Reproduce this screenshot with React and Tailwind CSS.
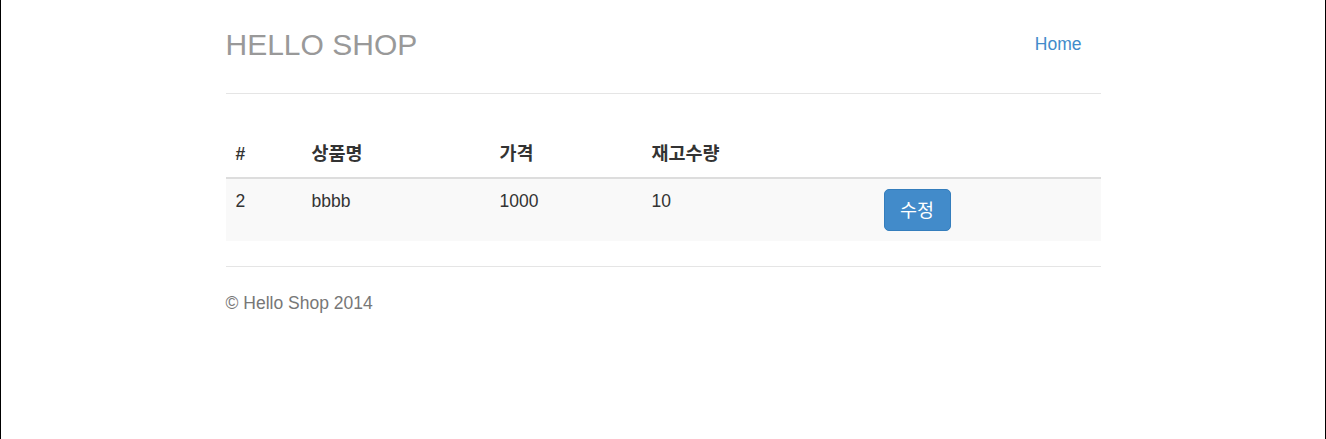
export default function App() {
  const font = { fontFamily: '"Liberation Sans", "Noto Sans CJK KR", Arial, sans-serif' };
  return (
    <div className="min-h-[439px] border-x border-black bg-white text-[#333] text-[17.5px] leading-[25px]" style={font}>
      <div className="w-[875px] mx-auto pt-[20px]">
        <div className="flex justify-between border-b border-[#e5e5e5] pb-[23px]">
          <h3 className="text-[30px] leading-[50px] text-[#999] font-normal m-0">HELLO SHOP</h3>
          <ul className="flex">
            <li>
              <a className="block px-[19px] pt-[11.5px] pb-[13.5px] text-[#428bca] leading-[25px]" href="#">Home</a>
            </li>
          </ul>
        </div>
        <table className="w-full table-fixed border-collapse mt-[38px] mb-[25px]">
          <thead>
            <tr>
              <th className="w-[76px] text-left font-bold px-[10px] pt-[10px] pb-[10px] border-b-2 border-[#ddd]">#</th>
              <th className="w-[188px] text-left font-bold px-[10px] pt-[10px] pb-[10px] border-b-2 border-[#ddd]"><span className="text-[18.5px] leading-[18px]">상품명</span></th>
              <th className="w-[152px] text-left font-bold px-[10px] pt-[10px] pb-[10px] border-b-2 border-[#ddd]"><span className="text-[18.5px] leading-[18px]">가격</span></th>
              <th className="w-[232px] text-left font-bold px-[10px] pt-[10px] pb-[10px] border-b-2 border-[#ddd]"><span className="text-[18.5px] leading-[18px]">재고수량</span></th>
              <th className="text-left font-bold px-[10px] pt-[10px] pb-[10px] border-b-2 border-[#ddd]"></th>
            </tr>
          </thead>
          <tbody>
            <tr className="bg-[#f9f9f9]">
              <td className="align-top p-[10px]">2</td>
              <td className="align-top p-[10px]">bbbb</td>
              <td className="align-top p-[10px]">1000</td>
              <td className="align-top p-[10px]">10</td>
              <td className="align-top p-[10px]">
                <button className="block bg-[#428bca] border border-[#357ebd] rounded-[5px] text-white px-[15.5px] py-[7.5px] leading-[25px] text-[18.5px]">수정</button>
              </td>
            </tr>
          </tbody>
        </table>
        <div className="border-t border-[#e5e5e5] pt-[24px] text-[#777]">
          <p>© Hello Shop 2014</p>
        </div>
      </div>
    </div>
  );
}
